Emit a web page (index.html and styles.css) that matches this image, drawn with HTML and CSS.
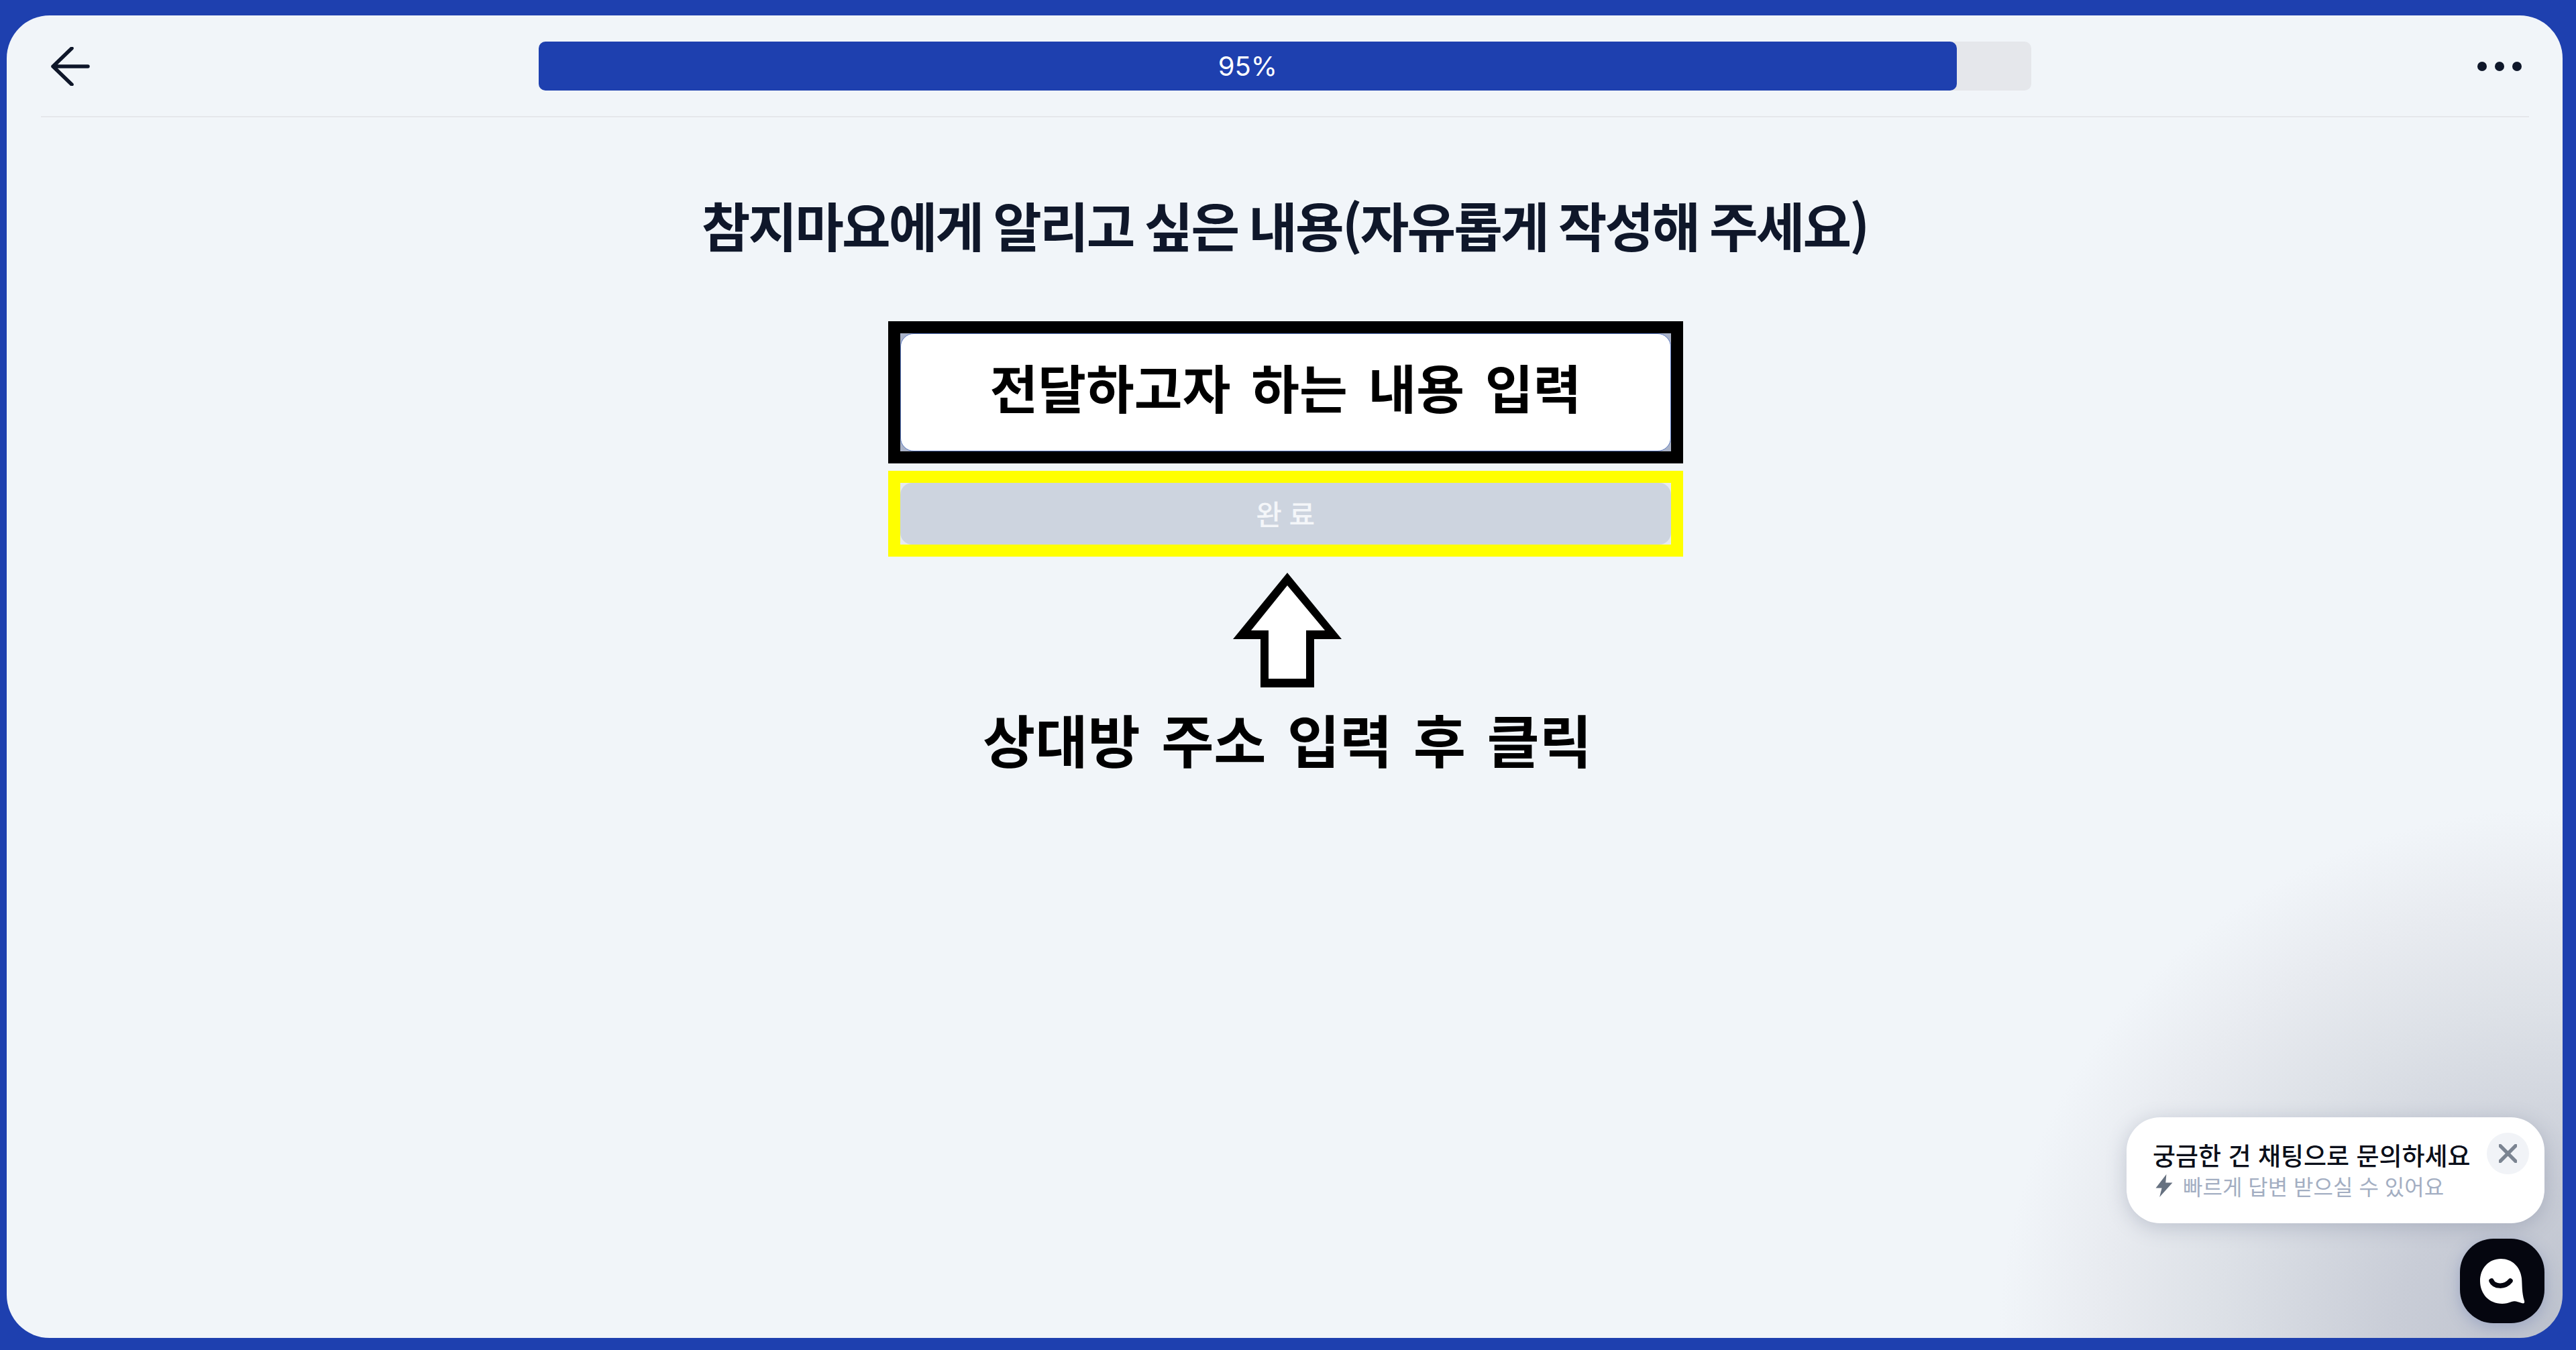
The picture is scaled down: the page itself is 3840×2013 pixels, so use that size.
FILE: index.html
```html
<!DOCTYPE html>
<html lang="ko">
<head>
<meta charset="utf-8">
<title>참지마요</title>
<link rel="stylesheet" href="styles.css">
</head>
<body>
<main class="card">
  <header class="topbar">
    <button class="back" aria-label="뒤로">
      <svg class="back-icon" viewBox="0 0 58 58" fill="none" stroke="#0f172a" stroke-width="5.5" stroke-linecap="round" stroke-linejoin="round"><path d="M31 2 3 29l28 27M3 29h52"/></svg>
    </button>
    <div class="track"><div class="fill">95%</div></div>
    <div class="dots"><i></i><i></i><i></i></div>
  </header>
  <section class="content">
    <h1 class="title">참지마요에게 알리고 싶은 내용(자유롭게 작성해 주세요)</h1>
    <div class="frame frame-black">
      <div class="field-corners"><div class="field">전달하고자 하는 내용 입력</div></div>
    </div>
    <div class="frame frame-yellow">
      <div class="done-corners"><div class="done">완료</div></div>
    </div>
    <svg class="up-arrow" viewBox="0 0 162 171"><path d="M81 0 162 99H121V171H41V99H0Z" fill="#000"/><path d="M81 19 137 86H109V158H53V86H27Z" fill="#fff"/></svg>
    <p class="hint">상대방 주소 입력 후 클릭</p>
  </section>
  <aside class="bubble">
    <div class="bubble-text">
      <strong class="bubble-title">궁금한 건 채팅으로 문의하세요</strong>
      <span class="bubble-sub">
        <svg class="bolt" viewBox="0 0 24 30"><path d="M15 0 1 18h8L6 30 23 11h-9Z" fill="#667180"/></svg>
        빠르게 답변 받으실 수 있어요
      </span>
    </div>
    <button class="close" aria-label="닫기">
      <svg viewBox="0 0 28 28" class="close-icon" fill="none" stroke="#7b8491" stroke-width="5.5" stroke-linecap="round"><path d="M2 2l24 24M26 2 2 26"/></svg>
    </button>
  </aside>
  <button class="launcher" aria-label="채팅">
    <svg class="launcher-icon" viewBox="0 0 67 67"><path d="M31 0C48 0 60 12 62 29c1 10 0 21 4 34 1 3-1 4-4 3-6-2-10-4-15-2-5 2-9 3-14 3C13 67 0 52 0 33 0 14 13 0 31 0Z" fill="#fff"/><path d="M17 33c4 9 20 10 28 0" fill="none" stroke="#05060f" stroke-width="7.5" stroke-linecap="round"/></svg>
  </button>
</main>
</body>
</html>
```
FILE: styles.css
```css
* { box-sizing: border-box; }
html, body { margin: 0; height: 100%; }
body {
  background: #1e40af;
  padding: 23px 20px 18px 10px;
  font-family: "Noto Sans CJK KR", "Noto Sans", sans-serif;
  overflow: hidden;
}
.card {
  position: relative;
  height: 100%;
  border-radius: 64px;
  overflow: hidden;
  background:
    radial-gradient(ellipse 840px 790px at 100% 100%, #bdc2cd 0%, #c9cdd7 30%, #dde1e7 62%, #e8ebf0 82%, rgba(241,245,249,0) 100%),
    #f1f5f9;
}
.topbar {
  display: grid;
  grid-template-columns: 742px 2225px 1fr;
  align-items: center;
  height: 152px;
  padding-top: 1px;
  margin: 0 50px 0 51px;
  border-bottom: 2px solid #e5e7eb;
}
button { border: 0; padding: 0; background: none; font: inherit; }
.back { display: flex; margin-left: 15px; }
.back-icon { width: 58px; height: 58px; }
.track {
  height: 73px;
  border-radius: 10px;
  background: #e5e7eb;
}
.fill {
  width: 95%;
  height: 100%;
  border-radius: 10px;
  background: #1e40af;
  color: #fff;
  font-family: "Inter", sans-serif;
  font-size: 40px;
  line-height: 73px;
  text-align: center;
}
.dots { display: flex; justify-content: flex-end; gap: 12px; margin-right: 11px; }
.dots i { width: 14px; height: 14px; border-radius: 50%; background: #0f172a; }
.content { display: flex; flex-direction: column; align-items: center; }
.title {
  margin: 104px 0 0;
  font-size: 79px;
  line-height: 112px;
  font-weight: 700;
  letter-spacing: -0.037em;
  word-spacing: -0.04em;
  color: #0f172a;
}
.frame { width: 1185px; margin-left: 3px; border: 18px solid; }
.frame-black { height: 212px; margin-top: 88px; border-color: #000; }
.frame-yellow { height: 128px; margin-top: 11px; border-color: #ff0; }
.field-corners { height: 100%; background: #aab3c8; }
.field {
  height: 100%;
  display: flex;
  align-items: center;
  justify-content: center;
  border: 1px solid #5a78c0;
  border-radius: 20px;
  background: #fff;
  color: #000;
  font-size: 78px;
  font-weight: 700;
  word-spacing: 0.115em;
  padding-bottom: 18px;
}
.done-corners { height: 100%; background: #e6eaf0; }
.done {
  height: 100%;
  display: flex;
  align-items: center;
  justify-content: center;
  border-radius: 18px;
  background: #cdd4df;
  color: #f4f6f9;
  font-size: 42px;
  font-weight: 500;
  letter-spacing: 0.25em;
  padding: 0 0 4px 10px;
}
.up-arrow { display: block; width: 162px; height: 171px; margin: 24px 0 0 8px; }
.hint {
  margin: 20px 0 0 8px;
  font-size: 85px;
  line-height: 112px;
  font-weight: 700;
  word-spacing: 0.09em;
  color: #000;
}
.bubble {
  position: absolute;
  left: 3160px;
  top: 1643px;
  width: 623px;
  height: 158px;
  display: flex;
  justify-content: space-between;
  padding: 23px 23px 0 39px;
  border-radius: 50px;
  background: #fff;
  box-shadow: 0 6px 30px rgba(90,100,130,.28);
}
.bubble-text { display: flex; flex-direction: column; }
.bubble-title { font-size: 37px; line-height: 48px; font-weight: 500; color: #0b0f1a; white-space: nowrap; margin-top: 9px; }
.bubble-sub { display: flex; align-items: center; gap: 14px; font-size: 32px; line-height: 46px; color: #a3aec2; white-space: nowrap; margin: -1px 0 0 3px; }
.bolt { flex: none; width: 28px; height: 34px; }
.close {
  width: 63px;
  height: 62px;
  display: flex;
  align-items: center;
  justify-content: center;
  border-radius: 50%;
  background: #f1f3f7;
}
.close-icon { width: 27px; height: 28px; }
.launcher {
  position: absolute;
  left: 3657px;
  top: 1824px;
  width: 126px;
  height: 126px;
  display: flex;
  align-items: center;
  justify-content: center;
  border-radius: 50px;
  background: #05060f;
  box-shadow: 0 6px 22px rgba(90,110,170,.35);
}
.launcher-icon { width: 67px; height: 67px; }
```
